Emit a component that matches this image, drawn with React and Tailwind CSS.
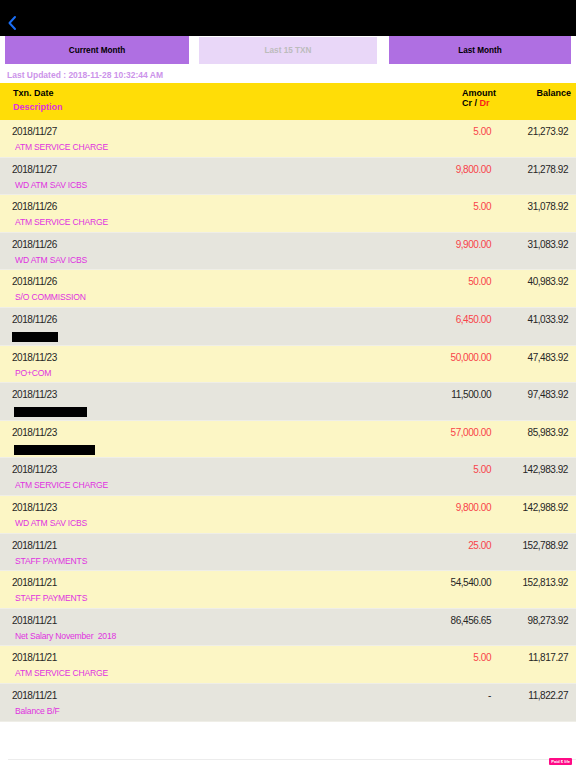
import React from 'react';

const rows = [
  { date: '2018/11/27', desc: 'ATM SERVICE CHARGE', amount: '5.00', dr: true, balance: '21,273.92' },
  { date: '2018/11/27', desc: 'WD ATM SAV ICBS', amount: '9,800.00', dr: true, balance: '21,278.92' },
  { date: '2018/11/26', desc: 'ATM SERVICE CHARGE', amount: '5.00', dr: true, balance: '31,078.92' },
  { date: '2018/11/26', desc: 'WD ATM SAV ICBS', amount: '9,900.00', dr: true, balance: '31,083.92' },
  { date: '2018/11/26', desc: 'S/O COMMISSION', amount: '50.00', dr: true, balance: '40,983.92' },
  { date: '2018/11/26', redact: 'w-[46px] ml-0', amount: '6,450.00', dr: true, balance: '41,033.92' },
  { date: '2018/11/23', desc: 'PO+COM', amount: '50,000.00', dr: true, balance: '47,483.92' },
  { date: '2018/11/23', redact: 'w-[73px] ml-[2px]', amount: '11,500.00', dr: false, balance: '97,483.92' },
  { date: '2018/11/23', redact: 'w-[81px] ml-[2px]', amount: '57,000.00', dr: true, balance: '85,983.92' },
  { date: '2018/11/23', desc: 'ATM SERVICE CHARGE', amount: '5.00', dr: true, balance: '142,983.92' },
  { date: '2018/11/23', desc: 'WD ATM SAV ICBS', amount: '9,800.00', dr: true, balance: '142,988.92' },
  { date: '2018/11/21', desc: 'STAFF PAYMENTS', amount: '25.00', dr: true, balance: '152,788.92' },
  { date: '2018/11/21', desc: 'STAFF PAYMENTS', amount: '54,540.00', dr: false, balance: '152,813.92' },
  { date: '2018/11/21', desc: 'Net Salary November  2018', amount: '86,456.65', dr: false, balance: '98,273.92' },
  { date: '2018/11/21', desc: 'ATM SERVICE CHARGE', amount: '5.00', dr: true, balance: '11,817.27' },
  { date: '2018/11/21', desc: 'Balance B/F', amount: '-', dr: false, balance: '11,822.27' },
];

function Row({ row, index }) {
  const bg = index % 2 === 0 ? 'bg-[#fcf6c5]' : 'bg-[#e6e5dd]';
  return (
    <div className={`${bg} h-[37.6px] flex border-b border-[#efeee7] box-border`}>
      <div className="flex-1 pl-[12px] pt-[5px] flex flex-col">
        <div className="text-[10px] leading-[13px] tracking-[-0.45px] text-[#262626]">{row.date}</div>
        {row.redact ? (
          <div className={`${row.redact} h-[10px] bg-black mt-[6px]`} />
        ) : (
          <div className="text-[8.6px] leading-[12px] tracking-[-0.2px] text-[#e033e0] pl-[3px] mt-[3px] whitespace-pre">{row.desc}</div>
        )}
      </div>
      <div className={`w-[100px] text-right pr-[8px] pt-[5px] text-[10px] leading-[13px] tracking-[-0.45px] ${row.dr ? 'text-[#f8434a]' : 'text-[#262626]'}`}>
        {row.amount}
      </div>
      <div className="w-[77px] text-right pr-[8px] pt-[5px] text-[10px] leading-[13px] tracking-[-0.45px] text-[#262626]">
        {row.balance}
      </div>
    </div>
  );
}

export default function App() {
  return (
    <div className="w-[576px] h-[768px] bg-white flex flex-col font-['Liberation_Sans',Arial,sans-serif] overflow-hidden">
      {/* top bar */}
      <div className="h-[36px] bg-black flex items-end pb-[5px] pl-[7px]">
        <svg width="10" height="16" viewBox="0 0 10 16" fill="none">
          <path d="M8 2L2.5 8L8 14" stroke="#1a6ef5" strokeWidth="2" strokeLinecap="round" strokeLinejoin="round" />
        </svg>
      </div>

      {/* tabs */}
      <div className="flex h-[28px] px-[5px]">
        <div className="w-[184px] bg-[#af6fe2] flex items-center justify-center pt-[2px] text-[8.2px] font-bold text-black">Current Month</div>
        <div className="w-[178px] ml-[10px] mt-[1px] bg-[#e9d7f8] flex items-center justify-center pt-[1px] text-[8.2px] font-bold text-[#bcbcbc]">Last 15 TXN</div>
        <div className="w-[182px] ml-[12px] bg-[#af6fe2] flex items-center justify-center pt-[2px] text-[8.2px] font-bold text-black">Last Month</div>
      </div>

      <div className="h-[19px] pl-[7px] pt-[5px] text-[8.5px] font-bold text-[#cc93ea]">Last Updated : 2018-11-28 10:32:44 AM</div>

      {/* header */}
      <div className="h-[37px] bg-[#ffdd07] flex">
        <div className="flex-1 pl-[13px] pt-[5px]">
          <div className="text-[9px] leading-[11px] font-bold text-black">Txn. Date</div>
          <div className="text-[9px] leading-[11px] font-bold text-[#e02ce0] mt-[3px]">Description</div>
        </div>
        <div className="w-[100px] pt-[5px] flex justify-end pr-[3px]">
          <div className="text-[9px] leading-[10px] font-bold text-black">
            <div>Amount</div>
            <div>
              Cr / <span className="text-[#f81c1c]">Dr</span>
            </div>
          </div>
        </div>
        <div className="w-[77px] text-right pr-[5px] pt-[5px] text-[9px] leading-[11px] font-bold text-black">Balance</div>
      </div>

      {rows.map((row, i) => (
        <Row key={i} row={row} index={i} />
      ))}

      <div className="flex-1 relative">
        <div className="absolute left-[8px] right-0 bottom-[8px] border-t border-[#ececec]" />
        <div className="absolute right-[4px] bottom-[3px] h-[7px] px-[2px] rounded-[1px] bg-[#ff0a86] text-white text-[4px] leading-[7px] font-bold">Paid $ life</div>
      </div>
    </div>
  );
}
